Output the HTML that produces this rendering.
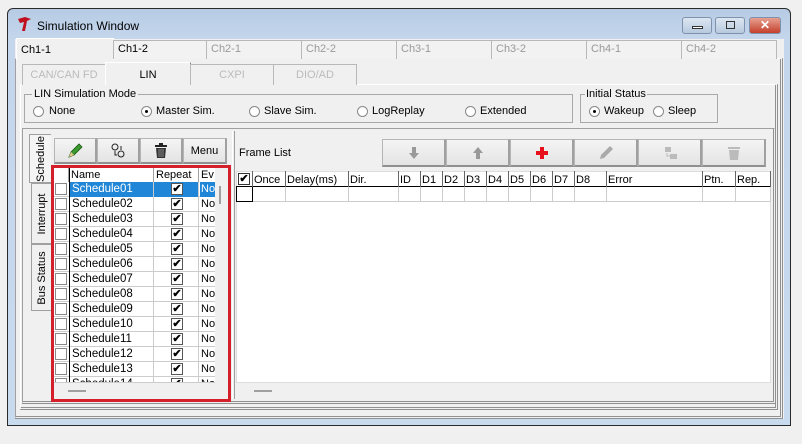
<!DOCTYPE html>
<html><head><meta charset="utf-8"><style>
*{box-sizing:border-box;margin:0;padding:0}
body{width:802px;height:444px;background:#f0f0f0;font-family:"Liberation Sans",sans-serif;font-size:11px;color:#000;position:relative;overflow:hidden}
.a{position:absolute}
.win{left:7px;top:8px;width:784px;height:418px;border:1px solid #2a2a2a;border-radius:6px 6px 0 0;background:linear-gradient(#b6cbe4,#c4d6ec 30px,#c8daee);}
.tb{border:1px solid #7f92ad;border-radius:3px;height:17px;top:17px}
.tab{top:40px;height:19px;border:1px solid #b8b8b8;border-bottom:none;background:#f2f2f2;color:#999;padding:2px 0 0 4px;font-size:11px}
.stab{top:64px;height:21px;border:1px solid #b8b8b8;border-bottom:none;background:#f0f0f0;color:#bbb;text-align:center;padding-top:4px}
.grp{border:1px solid #a8a8a8}
.rad{width:11px;height:11px;border:1px solid #888;border-radius:50%;background:#fff;top:106px}
.rad.on:after{content:"";position:absolute;left:3px;top:3px;width:3px;height:3px;background:#000;border-radius:50%}
.btn{border:1px solid #b5b5b5;border-bottom:2px solid #909090;border-right:2px solid #a0a0a0;background:linear-gradient(#f4f4f4,#e4e4e4);text-align:center}
.vt{width:20px;border:1px solid #a0a0a0;border-right:none;background:#f0f0f0}
.vt span{position:absolute;left:50%;top:50%;transform:translate(-50%,-50%) rotate(-90deg);white-space:nowrap}
.cb{width:12px;height:12px;border:1px solid #888;background:#fff}
.hd{border-right:1px solid #a0a0a0;height:15px;padding:1px 0 0 2px}
</style></head><body>
<div class="a win"></div>
<svg class="a" style="left:17px;top:16px" width="16" height="17" viewBox="0 0 16 17"><path d="M1 3 L8 1 L14 3 L10 5 L8 15 L5 15 L7 6 L3 7 Z" fill="#c01020"/></svg>
<div class="a" style="left:37px;top:19px;font-size:12px">Simulation Window</div>
<div class="a tb" style="left:682px;width:30px;background:linear-gradient(#dce6f2,#b8c9de)"><div class="a" style="left:9px;top:8px;width:11px;height:3px;border:1px solid #333;background:#fff"></div></div>
<div class="a tb" style="left:715px;width:30px;background:linear-gradient(#dce6f2,#b8c9de)"><div class="a" style="left:10px;top:3px;width:9px;height:8px;border:1px solid #333"></div></div>
<div class="a tb" style="left:749px;width:32px;background:linear-gradient(#e8a090,#c4402c);color:#fff;font-weight:bold;font-size:12px;text-align:center;line-height:15px">✕</div>
<div class="a" style="left:15px;top:39px;width:769px;height:380px;background:#f0f0f0"></div>
<div class="a" style="left:15px;top:58px;width:768px;height:361px;border:1px solid #a0a0a0;border-top-color:#fff;border-right:3px double #909090;border-bottom:3px double #909090"></div>
<div class="a tab" style="left:16px;width:98px;top:38px;height:22px;background:#f0f0f0;color:#000;padding-top:5px;border-color:#fff">Ch1-1</div>
<div class="a tab" style="left:113px;width:94px;color:#000">Ch1-2</div>
<div class="a tab" style="left:206px;width:96px">Ch2-1</div>
<div class="a tab" style="left:301px;width:96px">Ch2-2</div>
<div class="a tab" style="left:396px;width:96px">Ch3-1</div>
<div class="a tab" style="left:491px;width:96px">Ch3-2</div>
<div class="a tab" style="left:586px;width:96px">Ch4-1</div>
<div class="a tab" style="left:681px;width:96px">Ch4-2</div>
<div class="a" style="left:20px;top:84px;width:758px;height:326px;border:1px solid #fff;border-right:3px double #909090;border-bottom:3px double #909090"></div>
<div class="a stab" style="left:22px;width:84px">CAN/CAN FD</div>
<div class="a stab" style="left:105px;width:86px;top:62px;height:23px;color:#000;background:#f0f0f0;border-color:#fff;border-right-color:#888;padding-top:6px">LIN</div>
<div class="a stab" style="left:190px;width:84px">CXPI</div>
<div class="a stab" style="left:273px;width:84px">DIO/AD</div>
<div class="a grp" style="left:24px;top:94px;width:549px;height:29px"></div>
<div class="a" style="left:32px;top:88px;background:#f0f0f0;padding:0 2px;font-size:11px">LIN Simulation Mode</div>
<div class="a rad" style="left:33px"></div><div class="a" style="left:49px;top:105px">None</div>
<div class="a rad on" style="left:141px"></div><div class="a" style="left:156px;top:105px">Master Sim.</div>
<div class="a rad" style="left:249px"></div><div class="a" style="left:264px;top:105px">Slave Sim.</div>
<div class="a rad" style="left:357px"></div><div class="a" style="left:372px;top:105px">LogReplay</div>
<div class="a rad" style="left:465px"></div><div class="a" style="left:480px;top:105px">Extended</div>
<div class="a grp" style="left:580px;top:94px;width:138px;height:29px"></div>
<div class="a" style="left:585px;top:88px;background:#f0f0f0;padding:0 1px;font-size:11px">Initial Status</div>
<div class="a rad on" style="left:589px"></div><div class="a" style="left:604px;top:105px">Wakeup</div>
<div class="a rad" style="left:653px"></div><div class="a" style="left:668px;top:105px">Sleep</div>
<div class="a" style="left:22px;top:128px;width:754px;height:276px;border:1px solid #a0a0a0;border-bottom:3px double #909090;border-right:3px double #909090"></div>
<div class="a vt" style="left:29px;top:134px;height:49px;width:22px;background:#f4f4f4"><span>Schedule</span></div>
<div class="a vt" style="left:31px;top:183px;height:61px"><span>Interrupt</span></div>
<div class="a vt" style="left:31px;top:244px;height:67px"><span>Bus Status</span></div>
<div class="a btn" style="left:54px;top:138px;width:43px;height:26px"><svg width="18" height="18" viewBox="0 0 18 18" style="margin-top:3px"><path d="M3 15 L5 10 L13 2 L16 5 L8 13 Z" fill="#3a9a30" stroke="#1a5a10" stroke-width=".8"/><path d="M3 15 L5 10 L8 13Z" fill="#e8c890"/></svg></div>
<div class="a btn" style="left:97px;top:138px;width:43px;height:26px"><svg width="18" height="18" viewBox="0 0 18 18" style="margin-top:3px"><circle cx="6" cy="5" r="3" fill="none" stroke="#222"/><circle cx="12" cy="12" r="3" fill="none" stroke="#222"/><path d="M6 9 V13 H8 M12 4 V8" stroke="#222" fill="none"/></svg></div>
<div class="a btn" style="left:140px;top:138px;width:43px;height:26px"><svg width="16" height="18" viewBox="0 0 16 18" style="margin-top:3px"><rect x="2" y="3" width="12" height="2" fill="#222"/><rect x="6" y="1" width="4" height="2" fill="#222"/><path d="M3 6 H13 L12 16 H4 Z" fill="#333"/><path d="M6 7 V15 M8 7 V15 M10 7 V15" stroke="#888"/></svg></div>
<div class="a btn" style="left:183px;top:138px;width:44px;height:26px;padding-top:6px">Menu</div>
<div class="a" style="left:54px;top:168px;width:167px;height:215px;background:#fff;overflow:hidden">
<div class="a" style="left:0;top:0;width:167px;height:15px;border-bottom:1px solid #000;background:#fff"></div>
<div class="a hd" style="left:0;top:0;width:15px"></div>
<div class="a hd" style="left:15px;top:0;width:85px">Name</div>
<div class="a hd" style="left:100px;top:0;width:45px">Repeat</div>
<div class="a hd" style="left:145px;top:0;width:16px;overflow:hidden;border:none">Ev</div>
<div class="a" style="left:161px;top:0;width:6px;height:215px;background:#f0f0f0"><div class="a" style="left:4px;top:18px;width:2px;height:18px;background:#a0a0a0"></div></div>
</div>
<div class="a" style="left:69px;top:168px;width:1px;height:215px;background:#000"></div>
<div id="rows"></div>
<script>
var h='';for(var i=1;i<=14;i++){var y=182+(i-1)*15,s=i==1;var n=i<10?'0'+i:i;
h+='<div class="a" style="left:54px;top:'+y+'px;width:161px;height:15px;border-bottom:1px solid #ccc;background:#fff;'+(y+15>383?'height:'+(383-y)+'px;overflow:hidden':'')+'">'
+'<div class="a cb" style="left:1px;top:1px"></div>'
+'<div class="a" style="left:15px;top:0;width:85px;height:15px;padding:1px 0 0 2px;border-left:1px solid #000;border-right:1px solid #ccc;'+(s?'background:#1f86d8;color:#fff':'')+';font-size:11.5px">Schedule'+n+'</div>'
+'<div class="a" style="left:100px;top:0;width:45px;height:15px;border-right:1px solid #ccc;'+(s?'background:#1f86d8':'')+'"><div class="a cb" style="left:17px;top:1px;border-color:#555;font-size:11px;line-height:10px;text-align:center;font-weight:bold">✔</div></div>'
+'<div class="a" style="left:146px;top:0;width:15px;height:15px;overflow:hidden;padding:1px 0 0 1px;'+(s?'background:#1f86d8;color:#fff':'')+'">No</div></div>';}
document.getElementById('rows').innerHTML=h;
</script>
<div class="a" style="left:68px;top:390px;width:18px;height:2px;background:#a0a0a0"></div>
<div class="a" style="left:51px;top:165px;width:180px;height:237px;border:3px solid #d4202a"></div>
<div class="a" style="left:232px;top:131px;width:3px;height:268px;border-left:1px solid #fff;border-right:1px solid #a0a0a0"></div>
<div class="a" style="left:239px;top:147px;font-size:11px">Frame List</div>
<div class="a btn" style="left:382px;top:139px;width:64px;height:28px"><svg width="12" height="14" viewBox="0 0 12 14" style="margin-top:6px"><path d="M4 1 H8 V7 H11 L6 13 L1 7 H4Z" fill="#999"/></svg></div>
<div class="a btn" style="left:446px;top:139px;width:64px;height:28px"><svg width="12" height="14" viewBox="0 0 12 14" style="margin-top:6px"><path d="M4 13 H8 V7 H11 L6 1 L1 7 H4Z" fill="#999"/></svg></div>
<div class="a btn" style="left:510px;top:139px;width:64px;height:28px"><svg width="14" height="14" viewBox="0 0 14 14" style="margin-top:6px"><path d="M5 1 H9 V5 H13 V9 H9 V13 H5 V9 H1 V5 H5Z" fill="#e8101a"/></svg></div>
<div class="a btn" style="left:574px;top:139px;width:64px;height:28px"><svg width="16" height="16" viewBox="0 0 16 16" style="margin-top:5px"><path d="M2 14 L3 10 L12 1 L15 4 L6 13Z" fill="#aaa"/></svg></div>
<div class="a btn" style="left:638px;top:139px;width:64px;height:28px"><svg width="16" height="16" viewBox="0 0 16 16" style="margin-top:5px"><rect x="3" y="2" width="6" height="5" fill="#bbb"/><rect x="8" y="9" width="7" height="5" fill="#bbb"/><path d="M5 8 V11 H8" stroke="#bbb" fill="none"/></svg></div>
<div class="a btn" style="left:702px;top:139px;width:64px;height:28px"><svg width="14" height="16" viewBox="0 0 14 16" style="margin-top:5px"><rect x="1" y="2" width="12" height="2" fill="#bbb"/><path d="M2 5 H12 L11 15 H3Z" fill="#bbb"/></svg></div>
<div class="a" style="left:236px;top:171px;width:535px;height:212px;background:#fff;border:1px solid #ddd"></div>
<div class="a" style="left:236px;top:171px;width:534px;height:16px;border-bottom:1px solid #000"></div>
<div class="a cb" style="left:238px;top:173px;border-color:#333;font-size:11px;line-height:10px;text-align:center;font-weight:bold">✔</div>
<div id="fh"></div>
<script>
var c=[[252,'Once'],[285,'Delay(ms)'],[348,'Dir.'],[398,'ID'],[420,'D1'],[442,'D2'],[464,'D3'],[486,'D4'],[508,'D5'],[530,'D6'],[552,'D7'],[574,'D8'],[606,'Error'],[702,'Ptn.'],[735,'Rep.'],[770,'']];var s='';
for(var i=0;i<c.length;i++){s+='<div class="a" style="left:'+c[i][0]+'px;top:171px;width:1px;height:31px;background:#ccc"></div><div class="a" style="left:'+c[i][0]+'px;top:171px;width:1px;height:16px;background:#666"></div><div class="a" style="left:'+(c[i][0]+2)+'px;top:174px">'+c[i][1]+'</div>';}
document.getElementById('fh').innerHTML=s;
</script>
<div class="a" style="left:236px;top:201px;width:534px;height:1px;background:#ccc"></div>
<div class="a" style="left:236px;top:187px;width:17px;height:15px;border:1px solid #000;border-top:none"></div>
<div class="a" style="left:236px;top:383px;width:535px;height:16px;background:#f0f0f0"></div>
<div class="a" style="left:254px;top:390px;width:18px;height:2px;background:#a0a0a0"></div>
</body></html>
